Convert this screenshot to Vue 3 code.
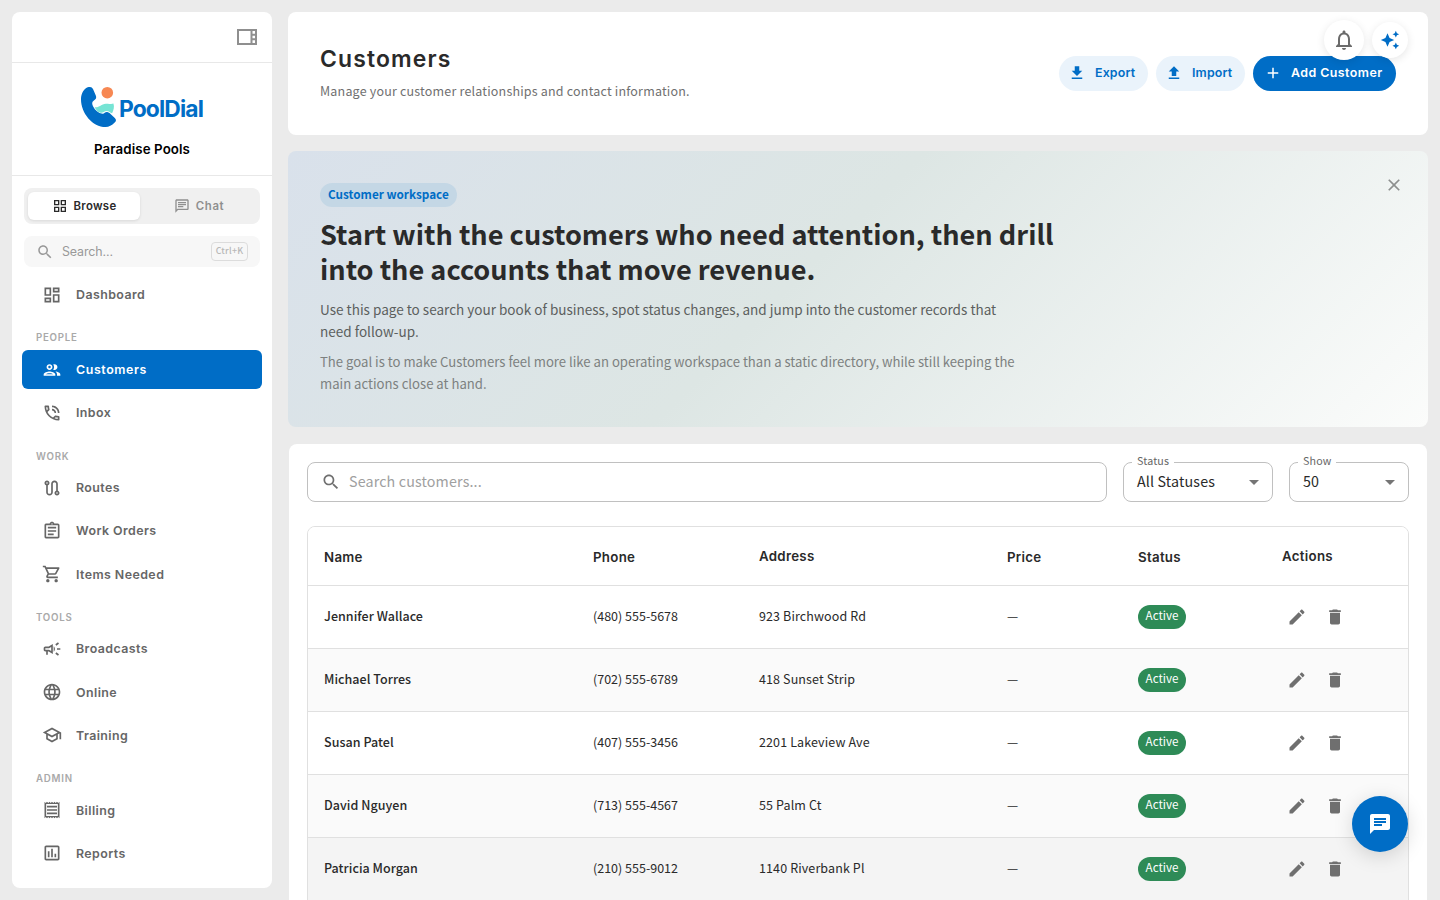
<script setup>
import { h } from 'vue'

const paths = {
  dashboard: 'M19 5v2h-4V5h4M9 5v6H5V5h4m10 8v6h-4v-6h4M9 17v2H5v-2h4M21 3h-8v6h8V3zM11 3H3v10h8V3zm10 8h-8v10h8V11zm-10 4H3v6h8v-6z',
  people: 'M9 13.75c-2.34 0-7 1.17-7 3.5V19h14v-1.75c0-2.33-4.66-3.5-7-3.5zM4.34 17c.84-.58 2.87-1.25 4.66-1.25s3.82.67 4.66 1.25H4.34zM9 12c1.93 0 3.5-1.57 3.5-3.5S10.93 5 9 5 5.5 6.57 5.5 8.5 7.07 12 9 12zm0-5c.83 0 1.5.67 1.5 1.5S9.83 10 9 10s-1.5-.67-1.5-1.5S8.17 7 9 7zm7.04 6.81c1.16.84 1.96 1.96 1.96 3.44V19h4v-1.75c0-2.02-3.5-3.17-5.96-3.44zM15 12c1.93 0 3.5-1.57 3.5-3.5S16.93 5 15 5c-.54 0-1.04.13-1.5.35.63.89 1 1.98 1 3.15s-.37 2.26-1 3.15c.46.22.96.35 1.5.35z',
  phone: 'M19 12h2c0-4.97-4.03-9-9-9v2c3.87 0 7 3.13 7 7zm-4 0h2c0-2.76-2.24-5-5-5v2c1.66 0 3 1.34 3 3zm5 3.5c-1.25 0-2.45-.2-3.57-.57-.1-.03-.21-.05-.31-.05-.26 0-.51.1-.71.29l-2.2 2.2c-2.83-1.44-5.15-3.75-6.59-6.58l2.2-2.21c.28-.27.36-.66.25-1.01C8.7 6.45 8.5 5.25 8.5 4c0-.55-.45-1-1-1H4c-.55 0-1 .45-1 1 0 9.39 7.61 17 17 17 .55 0 1-.45 1-1v-3.5c0-.55-.45-1-1-1zM5.03 5h1.5c.07.88.22 1.75.46 2.59L5.79 8.8c-.41-1.21-.67-2.48-.76-3.8zM19 18.97c-1.32-.09-2.59-.35-3.8-.75l1.2-1.2c.85.24 1.72.39 2.6.45v1.5z',
  route: 'M19 15.18V7c0-2.21-1.79-4-4-4s-4 1.79-4 4v10c0 1.1-.9 2-2 2s-2-.9-2-2V8.82C8.16 8.4 9 7.3 9 6c0-1.66-1.34-3-3-3S3 4.34 3 6c0 1.3.84 2.4 2 2.82V17c0 2.21 1.79 4 4 4s4-1.79 4-4V7c0-1.1.9-2 2-2s2 .9 2 2v8.18c-1.16.41-2 1.51-2 2.82 0 1.66 1.34 3 3 3s3-1.34 3-3c0-1.3-.84-2.4-2-2.82zM6 7c-.55 0-1-.45-1-1s.45-1 1-1 1 .45 1 1-.45 1-1 1zm12 12c-.55 0-1-.45-1-1s.45-1 1-1 1 .45 1 1-.45 1-1 1z',
  assignment: 'M7 15h7v2H7zm0-4h10v2H7zm0-4h10v2H7zm12-4h-4.18C14.4 1.84 13.3 1 12 1c-1.3 0-2.4.84-2.82 2H5c-.14 0-.27.01-.4.04-.39.08-.74.28-1.01.55-.18.18-.33.4-.43.64-.1.23-.16.49-.16.77v14c0 .27.06.54.16.78s.25.45.43.64c.27.27.62.47 1.01.55.13.02.26.03.4.03h14c1.1 0 2-.9 2-2V5c0-1.1-.9-2-2-2zm-7-.25c.41 0 .75.34.75.75s-.34.75-.75.75-.75-.34-.75-.75.34-.75.75-.75zM19 19H5V5h14v14z',
  cart: 'M15.55 13c.75 0 1.41-.41 1.75-1.03l3.58-6.49c.37-.66-.11-1.48-.87-1.48H5.21l-.94-2H1v2h2l3.6 7.59-1.35 2.44C4.52 15.37 5.48 17 7 17h12v-2H7l1.1-2h7.45zM6.16 6h12.15l-2.76 5H8.53L6.16 6zM7 18c-1.1 0-1.99.9-1.99 2S5.9 22 7 22s2-.9 2-2-.9-2-2-2zm10 0c-1.1 0-1.99.9-1.99 2s.89 2 1.99 2 2-.9 2-2-.9-2-2-2z',
  campaign: 'M18 11v2h4v-2h-4zM16 17.61c.96.71 2.21 1.65 3.2 2.39.4-.53.8-1.07 1.2-1.6-.99-.74-2.24-1.68-3.2-2.4-.4.54-.8 1.08-1.2 1.61zM20.4 5.6c-.4-.53-.8-1.07-1.2-1.6-.99.74-2.24 1.68-3.2 2.4.4.53.8 1.07 1.2 1.6.96-.72 2.21-1.65 3.2-2.4zM4 9c-1.1 0-2 .9-2 2v2c0 1.1.9 2 2 2h1v4h2v-4h1l5 3V6L8 9H4zm5.03 1.71L11 9.53v4.94l-1.97-1.18-.48-.29H4v-2h4.55l.48-.29zM15.5 12c0-1.33-.58-2.53-1.5-3.35v6.69c.92-.81 1.5-2.01 1.5-3.34z',
  globe: 'M11.99 2C6.47 2 2 6.48 2 12s4.47 10 9.99 10C17.52 22 22 17.52 22 12S17.52 2 11.99 2zm6.93 6h-2.95c-.32-1.25-.78-2.45-1.38-3.56 1.84.63 3.37 1.91 4.33 3.56zM12 4.04c.83 1.2 1.48 2.53 1.91 3.96h-3.82c.43-1.43 1.08-2.76 1.91-3.96zM4.26 14C4.1 13.36 4 12.69 4 12s.1-1.36.26-2h3.38c-.08.66-.14 1.32-.14 2 0 .68.06 1.34.14 2H4.26zm.82 2h2.95c.32 1.25.78 2.45 1.38 3.56-1.84-.63-3.37-1.9-4.33-3.56zm2.95-8H5.08c.96-1.66 2.49-2.93 4.33-3.56C8.81 5.55 8.35 6.75 8.03 8zM12 19.96c-.83-1.2-1.48-2.53-1.91-3.96h3.82c-.43 1.43-1.08 2.76-1.91 3.96zM14.34 14H9.66c-.09-.66-.16-1.32-.16-2 0-.68.07-1.35.16-2h4.68c.09.65.16 1.32.16 2 0 .68-.07 1.34-.16 2zm.25 5.56c.6-1.11 1.06-2.31 1.38-3.56h2.95c-.96 1.65-2.49 2.93-4.33 3.56zM16.36 14c.08-.66.14-1.32.14-2 0-.68-.06-1.34-.14-2h3.38c.16.64.26 1.31.26 2s-.1 1.36-.26 2h-3.38z',
  school: 'M12 3L1 9l4 2.18v6L12 21l7-3.82v-6l2-1.09V17h2V9L12 3zm6.82 6L12 12.72 5.18 9 12 5.28 18.82 9zM17 15.99l-5 2.73-5-2.73v-3.72L12 15l5-2.73v3.72z',
  receipt: 'M19.5 3.5L18 2l-1.5 1.5L15 2l-1.5 1.5L12 2l-1.5 1.5L9 2 7.5 3.5 6 2 4.5 3.5 3 2v20l1.5-1.5L6 22l1.5-1.5L9 22l1.5-1.5L12 22l1.5-1.5L15 22l1.5-1.5L18 22l1.5-1.5L21 22V2l-1.5 1.5zM19 19.09H5V4.91h14v14.18zM6 15h12v2H6zm0-4h12v2H6zm0-4h12v2H6z',
  assessment: 'M19 3H5c-1.1 0-2 .9-2 2v14c0 1.1.9 2 2 2h14c1.1 0 2-.9 2-2V5c0-1.1-.9-2-2-2zm0 16H5V5h14v14zM7 10h2v7H7zm4-3h2v10h-2zm4 6h2v4h-2z',
  settings: 'M19.43 12.98c.04-.32.07-.64.07-.98s-.03-.66-.07-.98l2.11-1.65c.19-.15.24-.42.12-.64l-2-3.46c-.12-.22-.39-.3-.61-.22l-2.49 1c-.52-.4-1.08-.73-1.69-.98l-.38-2.65C14.46 2.18 14.25 2 14 2h-4c-.25 0-.46.18-.49.42l-.38 2.65c-.61.25-1.17.59-1.69.98l-2.49-1c-.23-.09-.49 0-.61.22l-2 3.46c-.13.22-.07.49.12.64l2.11 1.65c-.04.32-.07.65-.07.98s.03.66.07.98l-2.11 1.65 2.12 4.32 3.1-.78 1.69.98.38 2.65h5l.38-2.65 1.69-.98 3.1.78 2.12-4.32z',
  chatLines: 'M4 4h16v12H5.17L4 17.17V4m0-2c-1.1 0-1.99.9-1.99 2L2 22l4-4h14c1.1 0 2-.9 2-2V4c0-1.1-.9-2-2-2H4zm2 10h8v2H6v-2zm0-3h12v2H6V9zm0-3h12v2H6V6z',
  chat: 'M20 2H4c-1.1 0-1.99.9-1.99 2L2 22l4-4h14c1.1 0 2-.9 2-2V4c0-1.1-.9-2-2-2zM6 9h12v2H6V9zm8 5H6v-2h8v2zm4-6H6V6h12v2z',
  grid: 'M3 3v8h8V3H3zm6 6H5V5h4v4zm-6 4v8h8v-8H3zm6 6H5v-4h4v4zm4-16v8h8V3h-8zm6 6h-4V5h4v4zm-6 4v8h8v-8h-8zm6 6h-4v-4h4v4z',
  search: 'M15.5 14h-.79l-.28-.27C15.41 12.59 16 11.11 16 9.5 16 5.91 13.09 3 9.5 3S3 5.91 3 9.5 5.91 16 9.5 16c1.61 0 3.09-.59 4.23-1.57l.27.28v.79l5 4.99L20.49 19l-4.99-5zm-6 0C7.01 14 5 11.99 5 9.5S7.01 5 9.5 5 14 7.01 14 9.5 11.99 14 9.5 14z',
  download: 'M19 9h-4V3H9v6H5l7 7 7-7zM5 18v2h14v-2H5z',
  upload: 'M9 16h6v-6h4l-7-7-7 7h4zm-4 2h14v2H5z',
  plus: 'M19 13h-6v6h-2v-6H5v-2h6V5h2v6h6v2z',
  bell: 'M12 22c1.1 0 2-.9 2-2h-4c0 1.1.9 2 2 2zm6-6v-5c0-3.07-1.63-5.64-4.5-6.32V4c0-.83-.67-1.5-1.5-1.5s-1.5.67-1.5 1.5v.68C7.64 5.36 6 7.92 6 11v5l-2 2v1h16v-1l-2-2zm-2 1H8v-6c0-2.48 1.51-4.5 4-4.5s4 2.02 4 4.5v6z',
  sparkle: 'M19 9l1.25-2.75L23 5l-2.75-1.25L19 1l-1.25 2.75L15 5l2.75 1.25L19 9zm-7.5.5L9 4 6.5 9.5 1 12l5.5 2.5L9 20l2.5-5.5L17 12l-5.5-2.5zM19 15l-1.25 2.75L15 19l2.75 1.25L19 23l1.25-2.75L23 19l-2.75-1.25L19 15z',
  edit: 'M3 17.25V21h3.75L17.81 9.94l-3.75-3.75L3 17.25zM20.71 7.04c.39-.39.39-1.02 0-1.41l-2.34-2.34c-.39-.39-1.02-.39-1.41 0l-1.83 1.83 3.75 3.75 1.83-1.83z',
  trash: 'M6 19c0 1.1.9 2 2 2h8c1.1 0 2-.9 2-2V7H6v12zM19 4h-3.5l-1-1h-5l-1 1H5v2h14V4z',
  caret: 'M7 10l5 5 5-5z',
  close: 'M19 6.41L17.59 5 12 10.59 6.41 5 5 6.41 10.59 12 5 17.59 6.41 19 12 13.41 17.59 19 19 17.59 13.41 12z',
  panel: 'M2 4v16h20V4H2zm18 4.67h-2.5V6H20v2.67zm-2.5 2H20v2.67h-2.5v-2.67zM4 6h11.5v12H4V6zm13.5 12v-2.67H20V18h-2.5z',
}

const Icon = (props) =>
  h('svg', { viewBox: '0 0 24 24', width: props.size, height: props.size, fill: 'currentColor', style: { display: 'block', flex: 'none' } }, [
    h('path', { d: paths[props.name] }),
  ])
Icon.props = ['name', 'size']

const sections = [
  { label: '', items: [['Dashboard', 'dashboard']] },
  { label: 'PEOPLE', items: [['Customers', 'people'], ['Inbox', 'phone']] },
  { label: 'WORK', items: [['Routes', 'route'], ['Work Orders', 'assignment'], ['Items Needed', 'cart']] },
  { label: 'TOOLS', items: [['Broadcasts', 'campaign'], ['Online', 'globe'], ['Training', 'school']] },
  { label: 'ADMIN', items: [['Billing', 'receipt'], ['Reports', 'assessment'], ['', 'settings']] },
]

const customers = [
  ['Jennifer Wallace', '(480) 555-5678', '923 Birchwood Rd'],
  ['Michael Torres', '(702) 555-6789', '418 Sunset Strip'],
  ['Susan Patel', '(407) 555-3456', '2201 Lakeview Ave'],
  ['David Nguyen', '(713) 555-4567', '55 Palm Ct'],
  ['Patricia Morgan', '(210) 555-9012', '1140 Riverbank Pl'],
]
</script>

<template>
  <div class="app">
    <aside class="sidebar">
      <div class="side-top"><Icon name="panel" size="24" /></div>
      <div class="brand">
        <div class="logo">
          <svg class="mark" viewBox="0 0 37 42" width="37" height="42">
            <path fill="#006dc6" d="M8.6 1.1C11 .6 12 1.2 13 3l2.800 6.500c1 2.300.2 3.700-2.200 5.300-1.800 1.300-1.700 3-.6 5.400 2.300 4.300 5.200 6.800 9.500 7.600 1.700.300 2.500-1.800 4.500-1.700 1.500.1 2.400 1 3.800 2.200l4 3.600c1.700 1.600 1.500 3-.1 4.700C31.800 39.600 29 41 25.600 41 12.500 41 1 27 1 13.400 1 7.300 4.200 2.200 8.600 1.100z" />
            <path fill="#76e4d4" d="M14.600 21.200c4.200 1 6.400-3.200 11.200-3.500 3.400-.2 5 .8 7.600-.1 1.300 3.400.1 6.700-1.300 9.700-2-.7-3.400-2.500-5.600-2.300-2.300.1-3.600 2.300-5.800 1.800-3-.8-4.800-3-6.100-5.600z" />
            <circle fill="#f78853" cx="27.300" cy="6.700" r="5.800" />
          </svg>
          <span class="wordmark">PoolDial</span>
        </div>
        <div class="company">Paradise Pools</div>
      </div>
      <div class="mode">
        <div class="mode-tab on"><Icon name="grid" size="16" /><span>Browse</span></div>
        <div class="mode-tab"><Icon name="chatLines" size="16" /><span>Chat</span></div>
      </div>
      <div class="side-search">
        <Icon name="search" size="18" />
        <span>Search...</span>
        <kbd>Ctrl+K</kbd>
      </div>
      <nav>
        <template v-for="s in sections" :key="s.label">
          <div v-if="s.label" class="group">{{ s.label }}</div>
          <a v-for="[name, icon] in s.items" :key="name" class="item" :class="{ active: name === 'Customers' }">
            <Icon :name="icon" size="20" /><span v-if="name">{{ name }}</span>
          </a>
        </template>
      </nav>
    </aside>

    <main>
      <header class="card page-head">
        <div class="titles">
          <h1>Customers</h1>
          <p>Manage your customer relationships and contact information.</p>
        </div>
        <div class="actions">
          <button class="btn soft"><Icon name="download" size="18" />Export</button>
          <button class="btn soft"><Icon name="upload" size="18" />Import</button>
          <button class="btn solid"><Icon name="plus" size="18" />Add Customer</button>
        </div>
      </header>

      <section class="banner">
        <span class="tag">Customer workspace</span>
        <h2>Start with the customers who need attention, then drill<br />into the accounts that move revenue.</h2>
        <p class="lead">Use this page to search your book of business, spot status changes, and jump into the customer records that<br />need follow-up.</p>
        <p class="note">The goal is to make Customers feel more like an operating workspace than a static directory, while still keeping the<br />main actions close at hand.</p>
        <span class="dismiss"><Icon name="close" size="20" /></span>
      </section>

      <section class="list">
        <div class="filters">
          <div class="field grow"><Icon name="search" size="20" /><span class="ph">Search customers...</span></div>
          <div class="field select w150"><label>Status</label><span>All Statuses</span><Icon name="caret" size="24" /></div>
          <div class="field select w120"><label>Show</label><span>50</span><Icon name="caret" size="24" /></div>
        </div>
        <div class="table">
          <div class="row head">
            <span>Name</span><span>Phone</span><span class="up">Address</span><span>Price</span><span>Status</span><span class="up">Actions</span>
          </div>
          <div v-for="c in customers" :key="c[0]" class="row">
            <span class="cell name">{{ c[0] }}</span><span class="cell">{{ c[1] }}</span><span class="cell addr">{{ c[2] }}</span><span class="cell">—</span>
            <span><i class="chip">Active</i></span>
            <span class="ops"><Icon name="edit" size="20" /><Icon name="trash" size="20" /></span>
          </div>
        </div>
      </section>
    </main>

    <div class="float bell"><Icon name="bell" size="24" /></div>
    <div class="float spark"><Icon name="sparkle" size="20" /></div>
    <div class="fab"><Icon name="chat" size="24" /></div>
  </div>
</template>

<style>
body { margin: 0; overflow: hidden; background: #ebebeb; }
</style>

<style scoped>
* { box-sizing: border-box; }
.app {
  --ui: Inter, 'Liberation Sans', sans-serif;
  --text: 'Noto Sans CJK SC', 'Noto Sans', sans-serif;
  height: 900px; display: flex; gap: 16px; padding: 12px 12px 0; overflow: hidden;
  position: relative; background: #ebebeb; color: #2a2a2a; font-family: var(--text); font-size: 12.500px;
}
h1, h2, p { margin: 0; }

.sidebar { width: 260px; height: 876px; flex: none; background: #fff; border-radius: 8px; overflow: hidden; font-family: var(--ui); }
.side-top { height: 51px; padding: 13px 13px 0; display: flex; justify-content: flex-end; color: #8f8f8f; border-bottom: 1px solid #e8e8e8; }
.brand { height: 113px; padding-top: 22.500px; border-bottom: 1px solid #e8e8e8; display: flex; flex-direction: column; align-items: center; }
.logo { display: flex; height: 42px; width: 124px; }
.mark { flex: none; }
.wordmark { font-size: 22.800px; font-weight: 700; color: #006dc6; letter-spacing: -.85px; line-height: 42px; padding-top: 2px; margin-left: 2px; }
.company { margin-top: 11px; font-size: 13.300px; font-weight: 600; letter-spacing: .1px; line-height: 20px; color: #000; }

.mode { margin: 12px 12px 0; height: 36px; padding: 4px; display: flex; background: #f0f0f0; border-radius: 8px; }
.mode-tab { flex: 1; display: flex; align-items: center; justify-content: center; gap: 6px; font-size: 11.400px; font-weight: 600; letter-spacing: .3px; color: #8f8f8f; border-radius: 6px; }
.mode-tab:not(.on) { padding-left: 2px; letter-spacing: .6px; }
.mode-tab.on { flex: 0 0 112px; background: #fff; color: #2a2a2a; box-shadow: 0 1px 3px rgba(0, 0, 0, .1); }
.side-search { margin: 12px 12px 0; height: 31px; padding: 0 12px; display: flex; align-items: center; background: #f7f7f7; border-radius: 8px; color: #999; font-size: 12.400px; }
.side-search span { margin-left: 8px; flex: 1; letter-spacing: -.1px; }
kbd { width: 37px; height: 19px; border: 1px solid #dcdcdc; border-radius: 4px; font: 500 8.900px/16px var(--text); letter-spacing: .25px; text-align: center; color: #b8b8b8; }
nav { margin: 8px 10px 0; }
.item { height: 39.200px; margin-bottom: 4px; padding-left: 20px; display: flex; align-items: center; gap: 14px; border-radius: 6px; color: #666; font-size: 12.400px; font-weight: 600; letter-spacing: .43px; }
.item.active { background: #006dc6; color: #fff; letter-spacing: .6px; }
.group { height: 31.750px; padding: 11.300px 0 0 14px; font-size: 9.700px; line-height: 18px; font-weight: 600; letter-spacing: .75px; color: #a9a9a9; }

main { width: 1140px; flex: none; }
.card { background: #fff; border-radius: 8px; }
.page-head { height: 123px; padding: 0 32px; display: flex; justify-content: space-between; align-items: center; }
.titles { padding-bottom: 4px; }
h1 { font: 600 22.900px/32px var(--ui); letter-spacing: 1.150px; }
.page-head p { margin-top: 6px; font-size: 12.500px; letter-spacing: .19px; line-height: 20px; color: #707070; }
.actions { display: flex; gap: 8px; }
.btn { height: 35px; border: 0; border-radius: 18px; padding: 0 12px 1px 9px; display: flex; align-items: center; gap: 9px; font: 600 12.400px/20px var(--ui); letter-spacing: .15px; white-space: nowrap; }
.soft { width: 89px; background: #eaf3fb; color: #006dc6; }
.solid { width: 143px; background: #006dc6; color: #fff; padding-left: 11px; letter-spacing: .45px; }

.banner { position: relative; height: 276px; margin-top: 16px; padding: 32px; border-radius: 8px; background: linear-gradient(135deg, #d9e1eb 0%, #dde6e4 45%, #fbfcfb 100%); }
.tag { display: flex; align-items: center; width: 137px; height: 24px; padding: 0 8px 3px; border-radius: 12px; background: #c4d7e5; color: #006dc6; font-weight: 700; font-size: 11.730px; white-space: nowrap; }
h2 { margin-top: 9px; font-size: 27.130px; line-height: 35px; font-weight: 700; white-space: nowrap; }
.lead { margin-top: 12px; font-size: 13.540px; line-height: 22px; color: #5c5f5e; white-space: nowrap; }
.note { margin-top: 9px; font-size: 13.140px; line-height: 22px; color: #7d8180; white-space: nowrap; }
.dismiss { position: absolute; right: 24px; top: 24px; color: #8d8f8e; }

.list { margin: 17px 1px 0; height: 480px; padding: 18px; background: #fff; border-radius: 8px; }
.filters { display: flex; gap: 16px; }
.field { position: relative; height: 40px; border: 1px solid #c0c0c0; border-radius: 8px; display: flex; align-items: center; padding: 0 6px 0 13px; font-size: 14.280px; letter-spacing: .15px; color: #2a2a2a; }
.field span { padding-bottom: 3px; }
.grow { flex: 1; color: #6f6f6f; }
.ph { margin-left: 8px; color: #a0a0a0; }
.select { justify-content: space-between; }
.select svg { color: #757575; }
.w150 { width: 150px; }
.w120 { width: 120px; }
label { position: absolute; left: 8px; top: -10px; padding: 0 5px; background: #fff; font-size: 10.700px; line-height: 16px; color: #666; }
.table { margin-top: 24px; border: 1px solid #e0e0e0; border-radius: 8px 8px 0 0; overflow: hidden; }
.row { display: grid; grid-template-columns: 269px 166px 248px 131px 144px 1fr; height: 63px; padding-left: 16px; align-items: center; border-bottom: 1px solid #e0e0e0; }
.row:nth-child(odd) { background: #fafafa; }
.row:nth-child(n + 6) { background: #f4f4f4; }
.row.head { height: 59px; padding-top: 1px; background: #fff; font: 600 13.300px/20px var(--ui); letter-spacing: .28px; }
.up { margin-top: -2px; }
.cell { padding-bottom: 3px; }
.name { font-weight: 500; letter-spacing: .04px; }
.addr { letter-spacing: .12px; }
.chip { display: block; width: 48px; height: 24px; border-radius: 12px; background: #2e8b57; color: #fff; font-style: normal; font-size: 11.600px; line-height: 21px; text-align: center; }
.ops { display: flex; gap: 18px; padding-left: 5px; color: #6f6f6f; }

.float { position: absolute; display: grid; place-items: center; border-radius: 50%; background: #fff; box-shadow: 0 2px 8px rgba(0, 0, 0, .1); }
.bell { width: 40px; height: 40px; left: 1324px; top: 20px; color: #6b6b6b; }
.spark { width: 36px; height: 36px; left: 1372px; top: 22px; color: #006dc6; }
.fab { position: absolute; left: 1352px; top: 796px; width: 56px; height: 56px; border-radius: 50%; display: grid; place-items: center; background: #006dc6; color: #fff; box-shadow: 0 4px 20px rgba(0, 0, 0, .15); }
</style>
